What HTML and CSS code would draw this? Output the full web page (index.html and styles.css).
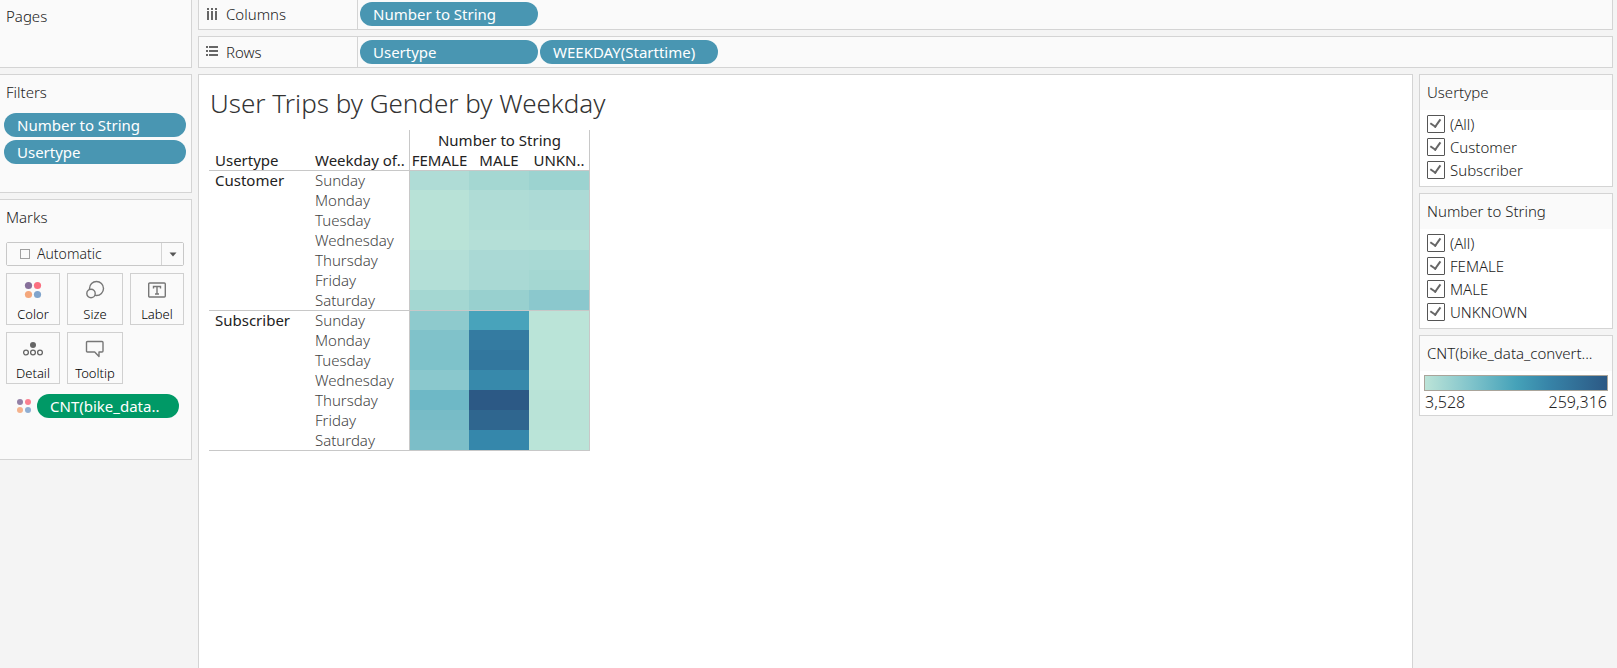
FILE: index.html
```html
<!DOCTYPE html>
<html lang="en">
<head>
<meta charset="utf-8">
<title>User Trips by Gender by Weekday</title>
<link rel="stylesheet" href="styles.css">
</head>
<body>
<div class="workbook">
  <aside class="sidebar">
    <section class="card pages"><h2 class="card-title">Pages</h2></section>
    <section class="card filters">
      <h2 class="card-title">Filters</h2>
      <div class="pill-stack">
        <button class="pill">Number to String</button>
        <button class="pill">Usertype</button>
      </div>
    </section>
    <section class="card marks">
      <h2 class="card-title">Marks</h2>
      <div class="mark-type">
        <svg class="mark-shape" width="10" height="10" viewBox="0 0 10 10"><rect x="0.5" y="0.5" width="9" height="9" fill="none" stroke="#a0a0a0"/></svg>
        <select class="mark-select" aria-label="Mark type"><option>Automatic</option></select>
        <span class="mark-arrow"><svg width="8" height="5" viewBox="0 0 8 5"><path d="M0.5 0.5h7L4 4.5z" fill="#555"/></svg></span>
      </div>
      <div class="mark-grid">
        <button class="mark-button">
          <svg width="20" height="20" viewBox="0 0 20 20"><circle cx="5.5" cy="5.5" r="3.6" fill="#86709a"/><circle cx="14.5" cy="5.5" r="3.6" fill="#fa6f80"/><circle cx="5.5" cy="14.5" r="3.6" fill="#f4a77c"/><circle cx="14.5" cy="14.5" r="3.6" fill="#80a4cc"/></svg>
          <span>Color</span>
        </button>
        <button class="mark-button">
          <svg width="20" height="20" viewBox="0 0 20 20" fill="#fafafa" stroke="#777" stroke-width="1.4"><circle cx="11.5" cy="8.5" r="7"/><circle cx="6" cy="13.5" r="4.2"/></svg>
          <span>Size</span>
        </button>
        <button class="mark-button">
          <svg width="20" height="20" viewBox="0 0 20 20" fill="none" stroke="#777"><rect x="1.7" y="3" width="16.6" height="14" rx="1" stroke-width="1.4"/><path d="M6.5 8.5V6.5h7v2M10 6.5v7.5M8 14h4" stroke-width="1.4"/></svg>
          <span>Label</span>
        </button>
        <button class="mark-button">
          <svg width="20" height="20" viewBox="0 0 20 20" fill="none" stroke="#666" stroke-width="1.3"><circle cx="10" cy="6" r="3" fill="#666" stroke="none"/><circle cx="3" cy="13.5" r="2.4"/><circle cx="10" cy="13.5" r="2.4"/><circle cx="17" cy="13.5" r="2.4"/></svg>
          <span>Detail</span>
        </button>
        <button class="mark-button">
          <svg width="20" height="20" viewBox="0 0 20 20" fill="none" stroke="#777" stroke-width="1.4" stroke-linejoin="round"><path d="M2.5 2.5h14.5q1 0 1 1v8.500q0 1-1 1H14v4.500L9.700 13H2.500q-1 0-1-1V3.500q0-1 1-1z"/></svg>
          <span>Tooltip</span>
        </button>
      </div>
      <div class="encoding">
        <svg width="16" height="16" viewBox="0 0 16 16"><circle cx="4" cy="4" r="3" fill="#9380a6"/><circle cx="12" cy="4" r="3" fill="#fa8090"/><circle cx="4" cy="12" r="3" fill="#f5b28c"/><circle cx="12" cy="12" r="3" fill="#90aed2"/></svg>
        <button class="pill measure">CNT(bike_data..</button>
      </div>
    </section>
  </aside>

  <div class="workspace">
    <div class="shelf columns-shelf">
      <div class="shelf-label">
        <svg width="12" height="14" viewBox="0 0 12 14" fill="#666"><path d="M1 1h2v2H1zM5 1h2v2H5zM9 1h2v2H9zM1 4h2v9H1zM5 4h2v9H5zM9 4h2v9H9z"/></svg>
        <span>Columns</span>
      </div>
      <button class="pill">Number to String</button>
    </div>
    <div class="shelf rows-shelf">
      <div class="shelf-label">
        <svg width="12" height="14" viewBox="0 0 12 14" fill="#666"><path d="M0 1h2v2H0zM0 5h2v2H0zM0 9h2v2H0zM3 1h9v2H3zM3 5h9v2H3zM3 9h9v2H3z"/></svg>
        <span>Rows</span>
      </div>
      <button class="pill">Usertype</button>
      <button class="pill">WEEKDAY(Starttime)</button>
    </div>

    <div class="stage">
      <main class="view">
        <h1 class="view-title">User Trips by Gender by Weekday</h1>
        <table class="heatmap">
          <colgroup><col class="col-head"><col class="col-head"><col class="col-cell"><col class="col-cell"><col></colgroup>
          <thead>
            <tr><td colspan="2"></td><th class="span-head" colspan="3">Number to String</th></tr>
            <tr><th class="left">Usertype</th><th class="left">Weekday of..</th><th class="edge">FEMALE</th><th>MALE</th><th class="end">UNKN..</th></tr>
          </thead>
          <tbody>
            <tr><th class="left group" rowspan="7">Customer</th><th class="day">Sunday</th><td class="edge" style="background:#afdcd6"></td><td style="background:#a4d7d2"></td><td class="end" style="background:#9cd3d0"></td></tr>
            <tr><th class="day">Monday</th><td class="edge" style="background:#b8e2d7"></td><td style="background:#afdcd6"></td><td class="end" style="background:#acdad6"></td></tr>
            <tr><th class="day">Tuesday</th><td class="edge" style="background:#b8e2d7"></td><td style="background:#b0ddd6"></td><td class="end" style="background:#aedbd6"></td></tr>
            <tr><th class="day">Wednesday</th><td class="edge" style="background:#b9e3d7"></td><td style="background:#b4dfd7"></td><td class="end" style="background:#b3dfd7"></td></tr>
            <tr><th class="day">Thursday</th><td class="edge" style="background:#b4dfd7"></td><td style="background:#aad9d5"></td><td class="end" style="background:#a8d9d4"></td></tr>
            <tr><th class="day">Friday</th><td class="edge" style="background:#b3dfd7"></td><td style="background:#a9d9d4"></td><td class="end" style="background:#a4d7d2"></td></tr>
            <tr><th class="day">Saturday</th><td class="edge" style="background:#a4d7d2"></td><td style="background:#98d0cf"></td><td class="end" style="background:#8bc8cd"></td></tr>
          </tbody>
          <tbody>
            <tr><th class="left group" rowspan="7">Subscriber</th><th class="day">Sunday</th><td class="edge" style="background:#8ecacd"></td><td style="background:#48a3bb"></td><td class="end" style="background:#bbe4d8"></td></tr>
            <tr><th class="day">Monday</th><td class="edge" style="background:#80c2ca"></td><td style="background:#347ba1"></td><td class="end" style="background:#bae4d8"></td></tr>
            <tr><th class="day">Tuesday</th><td class="edge" style="background:#7ec2ca"></td><td style="background:#32779e"></td><td class="end" style="background:#bae4d8"></td></tr>
            <tr><th class="day">Wednesday</th><td class="edge" style="background:#8ac8cd"></td><td style="background:#3789ab"></td><td class="end" style="background:#bbe4d8"></td></tr>
            <tr><th class="day">Thursday</th><td class="edge" style="background:#6eb8c6"></td><td style="background:#2c5985"></td><td class="end" style="background:#b9e3d7"></td></tr>
            <tr><th class="day">Friday</th><td class="edge" style="background:#78bcc7"></td><td style="background:#2f668f"></td><td class="end" style="background:#b9e3d7"></td></tr>
            <tr><th class="day">Saturday</th><td class="edge" style="background:#7cbec8"></td><td style="background:#3587ab"></td><td class="end" style="background:#bae4d8"></td></tr>
          </tbody>
        </table>
      </main>

      <aside class="legends">
        <section class="legend">
          <h2 class="legend-title">Usertype</h2>
          <div class="checks">
            <label class="check"><input type="checkbox" checked><span>(All)</span></label>
            <label class="check"><input type="checkbox" checked><span>Customer</span></label>
            <label class="check"><input type="checkbox" checked><span>Subscriber</span></label>
          </div>
        </section>
        <section class="legend">
          <h2 class="legend-title">Number to String</h2>
          <div class="checks">
            <label class="check"><input type="checkbox" checked><span>(All)</span></label>
            <label class="check"><input type="checkbox" checked><span>FEMALE</span></label>
            <label class="check"><input type="checkbox" checked><span>MALE</span></label>
            <label class="check"><input type="checkbox" checked><span>UNKNOWN</span></label>
          </div>
        </section>
        <section class="legend">
          <h2 class="legend-title">CNT(bike_data_convert...</h2>
          <div class="ramp-box">
            <div class="ramp"></div>
            <div class="ramp-labels"><span>3,528</span><span>259,316</span></div>
          </div>
        </section>
      </aside>
    </div>
  </div>
</div>
</body>
</html>
```
FILE: styles.css
```css
* { box-sizing: border-box; }

body {
  margin: 0;
  background: #f4f4f4;
  color: #222;
  font: 300 15px/20px "Noto Sans", "Open Sans", sans-serif;
}

h1, h2 { margin: 0; font-weight: 300; }
button, select { font: inherit; color: inherit; margin: 0; }
svg { display: block; flex: none; }

.workbook { display: flex; gap: 6px; min-height: 100vh; padding-right: 4px; }

/* Left cards */
.sidebar { display: flex; flex-direction: column; gap: 6px; flex: 0 0 192px; }
.card { background: #fafafa; border: 1px solid #d4d4d4; border-left: 0; padding: 7px 5px 0 4px; }
.pages { border-top: 0; min-height: 68px; padding-top: 6px; }
.filters { min-height: 119px; }
.marks { min-height: 261px; padding: 7px 7px 0 6px; }
.card-title { font-size: 15px; line-height: 20px; padding-left: 2px; }
.marks .card-title { padding-left: 0; }

.pill-stack { display: flex; flex-direction: column; gap: 3px; margin-top: 11px; }
.pill {
  height: 24px;
  border: 0;
  border-radius: 12px;
  padding: 0 13px;
  background: #4996b2;
  color: #fff;
  font-weight: 400;
  line-height: 24px;
  text-align: left;
  white-space: nowrap;
}
.measure { background: #009966; flex: 1; }

.mark-type {
  position: relative;
  height: 24px;
  margin-top: 15px;
  border: 1px solid #c8c8c8;
  border-radius: 2px;
  background: #fff;
}
.mark-select {
  appearance: none;
  display: block;
  width: 100%;
  height: 22px;
  border: 0;
  padding: 0 30px;
  background: #fafafa;
  font-size: 14px;
}
.mark-shape { position: absolute; left: 13px; top: 6px; }
.mark-arrow {
  position: absolute;
  top: 0;
  right: 0;
  display: grid;
  place-items: center;
  width: 22px;
  height: 22px;
  border-left: 1px solid #d4d4d4;
  pointer-events: none;
}

.mark-grid { display: grid; grid-template-columns: 54fr 56fr 54fr; gap: 7px; margin-top: 7px; }
.mark-button {
  display: flex;
  flex-direction: column;
  align-items: center;
  gap: 4px;
  height: 52px;
  border: 1px solid #d0d0d0;
  padding: 6px 0 0;
  background: #fafafa;
  color: #000;
  font-size: 13px;
  line-height: 20px;
}
.encoding { display: flex; align-items: center; gap: 5px; margin-top: 10px; padding: 0 5px 0 10px; }

/* Shelves */
.workspace { display: flex; flex-direction: column; gap: 6px; flex: 1; min-width: 0; }
.shelf { display: flex; align-items: center; gap: 2px; background: #fafafa; border: 1px solid #d4d4d4; }
.shelf .pill { flex: 0 0 178px; }
.columns-shelf { height: 30px; border-top: 0; align-items: flex-start; }
.columns-shelf .pill { margin-top: 2px; }
.rows-shelf { height: 32px; }
.shelf-label {
  display: flex;
  align-items: center;
  align-self: stretch;
  gap: 8px;
  flex: 0 0 159px;
  padding: 0 0 1px 7px;
  border-right: 1px solid #d4d4d4;
}

/* Visualization */
.stage { display: flex; flex: 1; gap: 6px; }
.view { flex: 1; min-width: 0; background: #fff; border: 1px solid #d4d4d4; border-bottom: 0; padding: 10px; }
.view-title { font-size: 26px; line-height: 36px; padding-left: 1px; color: #333; }

.heatmap {
  width: 381px;
  margin-top: 9px;
  table-layout: fixed;
  border-collapse: separate;
  border-spacing: 0;
  border-bottom: 1px solid #c8c8c8;
}
.col-head { width: 100px; }
.col-cell { width: 60px; }
.heatmap th, .heatmap td { height: 20px; padding: 0; line-height: 19px; font-weight: 400; white-space: nowrap; }
.heatmap .left, .heatmap .day { padding-left: 6px; text-align: left; vertical-align: bottom; }
.heatmap .group { vertical-align: top; }
.heatmap .day { font-weight: 300; color: #444; }
.heatmap .edge { border-left: 1px solid #c8c8c8; }
.heatmap .end { border-right: 1px solid #c8c8c8; }
.heatmap .span-head { border-left: 1px solid #c8c8c8; border-right: 1px solid #c8c8c8; }
.heatmap tbody tr:first-child > * { border-top: 1px solid #c8c8c8; }

/* Right cards */
.legends { display: flex; flex-direction: column; gap: 6px; flex: 0 0 194px; }
.legend { background: #fff; border: 1px solid #d4d4d4; }
.legend-title { padding: 7px 7px 8px; background: #fafafa; font-size: 15px; line-height: 20px; white-space: nowrap; }
.checks { display: flex; flex-direction: column; gap: 3px; padding: 4px 7px 6px; }
.check { display: flex; align-items: center; gap: 5px; height: 20px; }
.check input {
  appearance: none;
  display: grid;
  place-items: center;
  width: 18px;
  height: 18px;
  margin: 0;
  border: 1px solid #555;
  border-radius: 1px;
  background: #fff;
}
.check input:checked::before {
  content: "";
  width: 5px;
  height: 8px;
  margin: 0 2px 4px 0;
  border: solid #666;
  border-width: 0 2px 2px 0;
  transform: rotate(35deg);
}
.ramp-box { padding: 4px 4px 0; }
.ramp { height: 16px; border: 1px solid #aaa59b; background: linear-gradient(to right, #bce4d8, #81c4cb 25%, #45a2b9 50%, #3784a8 68%, #2c5985); }
.ramp-labels { display: flex; justify-content: space-between; padding: 1px 1px 3px; font-size: 16px; }
```
